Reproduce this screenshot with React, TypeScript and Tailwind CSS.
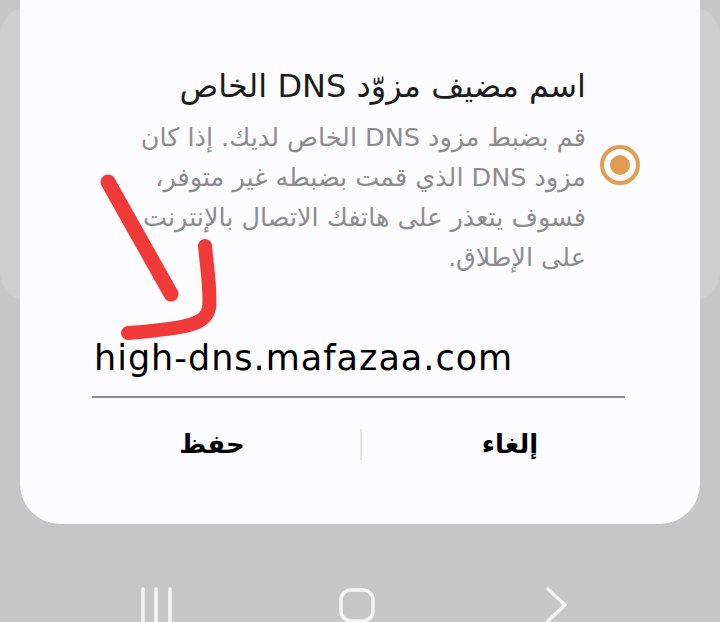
import React from 'react';

const arabic = { fontFamily: '"DejaVu Sans", "Noto Sans", sans-serif' };

function Radio() {
  return (
    <div className="mt-[78px] flex h-[40px] w-[40px] shrink-0 items-center justify-center rounded-full border-[4px] border-[#df9d52]">
      <div className="h-[20px] w-[20px] rounded-full bg-[#df9d52]" />
    </div>
  );
}

function NavBar() {
  return (
    <div className="ml-[57px] mt-[63px] grid w-[600px] grid-cols-3">
      <div className="flex justify-center">
        <svg width="34" height="40" viewBox="0 0 34 40" fill="none" stroke="#f4f4f4" strokeWidth="3.5" strokeLinecap="round">
          <line x1="3" y1="2" x2="3" y2="40" />
          <line x1="16" y1="2" x2="16" y2="40" />
          <line x1="30" y1="2" x2="30" y2="40" />
        </svg>
      </div>
      <div className="flex justify-center">
        <svg width="36" height="36" viewBox="0 0 36 36" fill="none" stroke="#f4f4f4" strokeWidth="3.5">
          <rect x="2" y="3" width="32" height="31" rx="10" />
        </svg>
      </div>
      <div className="flex justify-center">
        <svg width="24" height="40" viewBox="0 0 24 40" fill="none" stroke="#f4f4f4" strokeWidth="3.5" strokeLinecap="round" strokeLinejoin="round">
          <path d="M3 2 L20 18 L3 34" />
        </svg>
      </div>
    </div>
  );
}

export default function App() {
  return (
    <div className="relative h-[622px] w-[720px] overflow-hidden bg-[#c6c6c6]">
      {/* screen behind the dialog */}
      <div className="absolute left-0 right-0 top-[6px] h-[296px] rounded-[30px] bg-[#cecece]" />

      {/* Dialog */}
      <div className="relative mx-[20px] h-[524px] rounded-b-[40px] bg-[#fcfcfe] pt-[67px]">
        <div dir="rtl" className="flex items-start gap-[14px] pr-[60px]" style={arabic}>
          <Radio />
          <div>
            <h2 className="whitespace-nowrap text-[32px] leading-[38px] text-[#1c1c1c]">
              اسم مضيف مزوّد DNS الخاص
            </h2>
            <div className="mt-[12px] text-[25.5px] leading-[40px] text-[#8c8c90]">
              <div className="whitespace-nowrap">قم بضبط مزود DNS الخاص لديك. إذا كان</div>
              <div className="whitespace-nowrap">مزود DNS الذي قمت بضبطه غير متوفر،</div>
              <div className="whitespace-nowrap">فسوف يتعذر على هاتفك الاتصال بالإنترنت</div>
              <div className="whitespace-nowrap">على الإطلاق.</div>
            </div>
          </div>
        </div>

        {/* Host name field */}
        <div className="ml-[72px] mr-[75px] mt-[61px] border-b-2 border-[#8e8e8e] pb-[18px]">
          <div
            className="pl-[2px] text-[35px] leading-[40px] tracking-[1px] text-black"
            style={{ fontFamily: '"DejaVu Sans", sans-serif' }}
          >
            high-dns.mafazaa.com
          </div>
        </div>

        {/* Buttons */}
        <div dir="rtl" className="ml-[44px] mr-[42px] mt-[31px] flex h-[31px] items-center" style={arabic}>
          <button type="button" className="flex-1 text-center text-[26px] font-bold text-black">
            إلغاء
          </button>
          <div className="h-[31px] w-[2px] bg-[#e4e4e4]" />
          <button type="button" className="flex-1 text-center text-[26px] font-bold text-black">
            حفظ
          </button>
        </div>
      </div>

      <NavBar />

      {/* red hand-drawn arrow */}
      <svg className="pointer-events-none absolute inset-0" width="720" height="622" viewBox="0 0 720 622" fill="none">
        <path d="M108 182 L171 294" stroke="#f03a3a" strokeWidth="15" strokeLinecap="round" />
        <path d="M205 246 C207 268 211 292 209 308 C206 324 190 328 128 333" stroke="#f03a3a" strokeWidth="14" strokeLinecap="round" />
      </svg>
    </div>
  );
}
